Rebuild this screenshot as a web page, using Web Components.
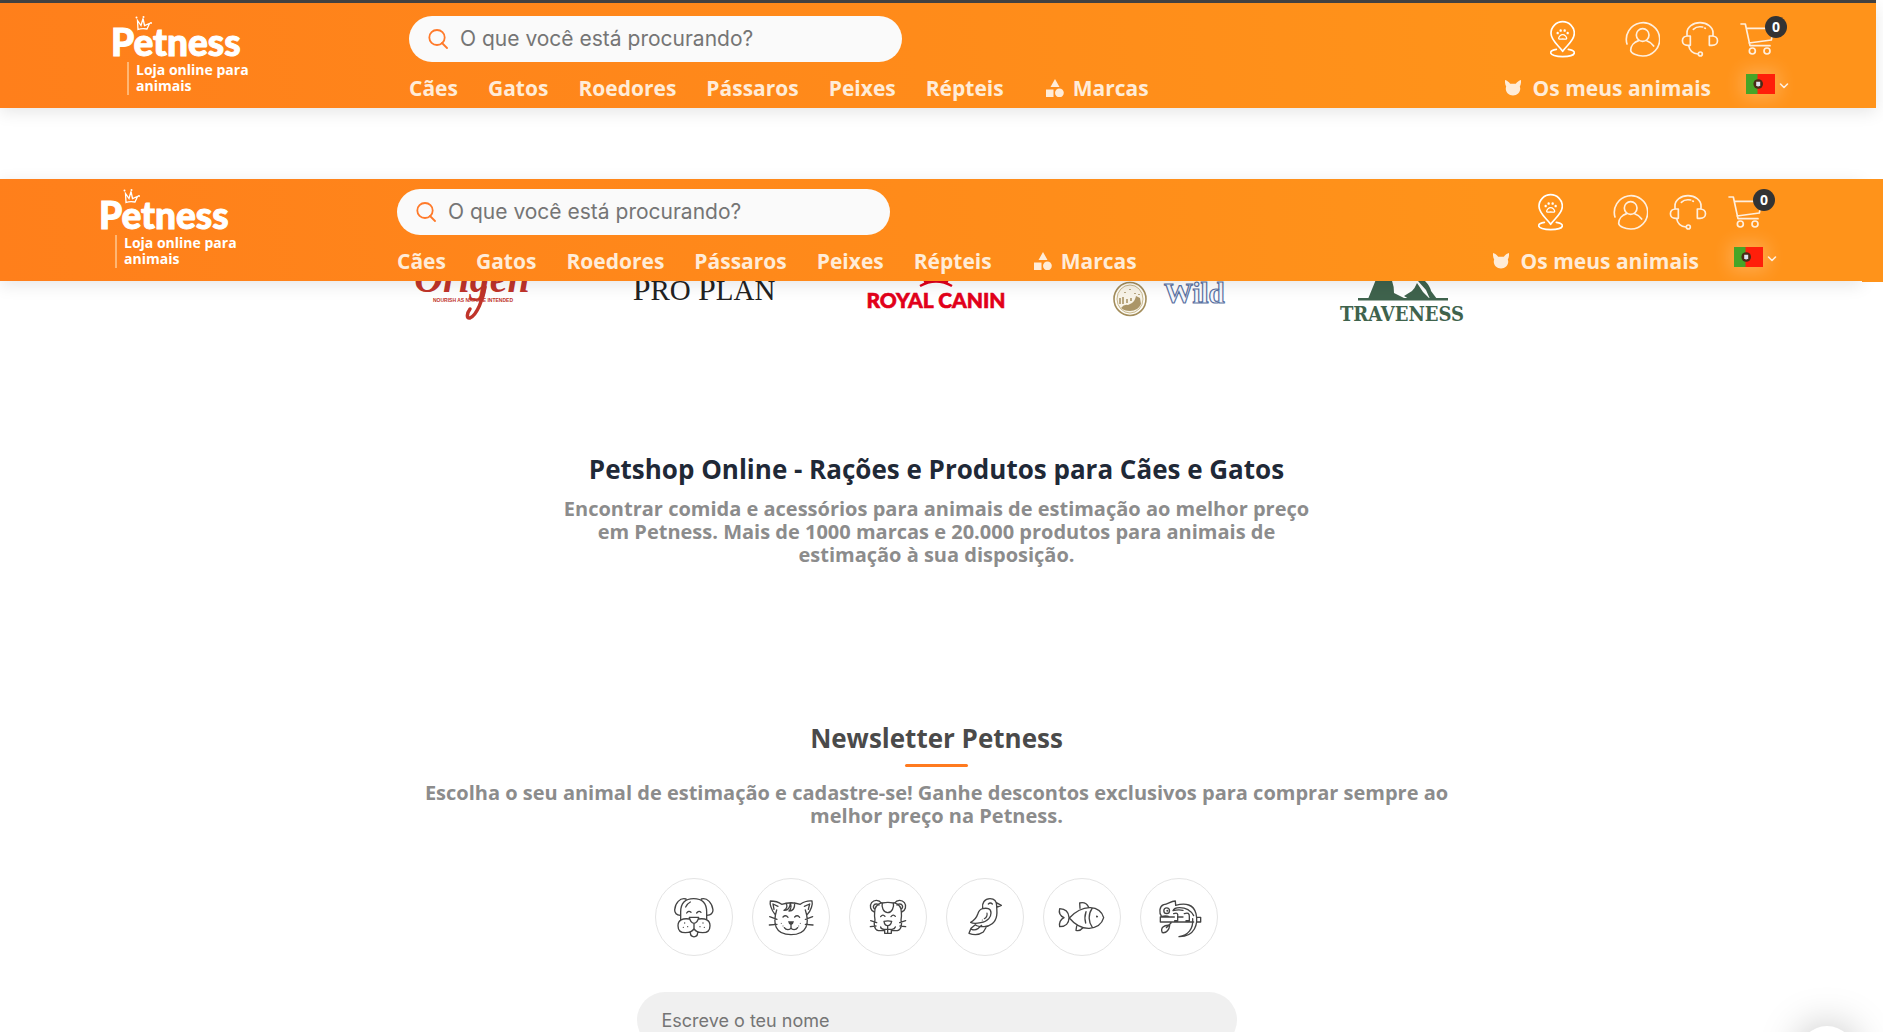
<!DOCTYPE html>
<html lang="pt">
<head>
<meta charset="utf-8">
<meta name="viewport" content="width=device-width, initial-scale=1">
<title>Petness - Loja online para animais</title>
<style>
html,body{margin:0;height:100%;overflow:hidden;background:#fff}
body{font-family:"Open Sans","Noto Sans",sans-serif}
</style>
</head>
<body>
<pet-page></pet-page>

<template id="t-logo">
<style>
:host{display:block;color:#fff;position:relative}
a{color:inherit;text-decoration:none;display:block}
.name{display:block;padding-top:5px;font:900 37px/41px Lato,sans-serif;-webkit-text-stroke:1px #fff}
.tag{display:inline-block;margin-left:16px;border-left:2px solid #ffb673;padding:0 0 1px 7px;font-weight:700;font-size:14px;line-height:16px}
svg{position:absolute;left:24px;top:0;width:20px;height:15px}
</style>
<a href="#"><span class="name">Petness</span><span class="tag">Loja online para<br>animais</span></a>
<svg viewBox="0 0 20 15" fill="none" stroke="#fff" stroke-width="1.3"><path d="M3 13.500 2.500 4.500 6 9.500 8 2.500 9.500 9.500 14.500 7.500 12 13Q7 12 3 13.500Z"/><g fill="#fff" stroke="none"><circle cx="1.500" cy="1.500" r="1"/><circle cx="8.500" cy="1" r="1"/><circle cx="16" cy="7" r="1"/></g></svg>
</template>

<template id="t-search">
<style>
:host{display:block}
label{display:flex;align-items:center;gap:12px;height:46px;padding:0 19px;box-sizing:border-box;border-radius:23px;background:#fafafa}
svg{flex:none;width:20px;height:20px}
input{flex:1;min-width:0;border:0;padding:0;background:none;outline:0;font:400 21px/28px Inter,sans-serif;color:#333}
input::placeholder{color:#757575;opacity:1}
</style>
<label><svg viewBox="0 0 20 20" fill="none" stroke="#ff7a2a" stroke-width="1.8" stroke-linecap="round"><ellipse cx="9" cy="8.500" rx="7.700" ry="7.500"/><path d="M14 14l5 5"/></svg><input type="search" aria-label="Pesquisar" placeholder="O que você está procurando?"></label>
</template>

<template id="t-nav">
<style>
:host{display:block}
nav{display:flex;gap:30px;font-weight:700;font-size:21px;line-height:28px;white-space:nowrap}
a{color:#ffecd8;text-decoration:none}
.brands{display:flex;align-items:center;gap:9px;margin-left:12px}
svg{width:18px;height:18px;fill:#ffecd8}
</style>
<nav><a href="#">Cães</a><a href="#">Gatos</a><a href="#">Roedores</a><a href="#">Pássaros</a><a href="#">Peixes</a><a href="#">Répteis</a><a href="#" class="brands"><svg viewBox="0 0 18 18"><path d="M9 0l4.500 8h-9zM0 10.500h7.500V18H0z"/><circle cx="13.400" cy="13.800" r="4.400"/></svg>Marcas</a></nav>
</template>

<template id="t-tools">
<style>
:host{display:block}
.row{display:flex;align-items:center;justify-content:flex-end}
.icons{height:46px;gap:21px;padding-right:15px}
.icons a{display:flex;position:relative}
.pin{margin-right:29px}
svg{display:block;fill:none;stroke:#ffefde;stroke-width:5;stroke-linecap:round;stroke-linejoin:round}
.badge{position:absolute;right:-13px;top:-6px;width:22px;height:22px;border-radius:50%;background:#333;color:#fff;font-weight:700;font-size:14px;line-height:22px;text-align:center}
.second{margin-top:12px;height:28px;gap:35px}
.mine{display:flex;align-items:center;gap:12px;color:#ffecd8;text-decoration:none;font-weight:700;font-size:21px;line-height:28px;white-space:nowrap}
button{display:flex;align-items:center;align-self:flex-start;gap:4px;border:0;padding:0;background:none}
.flag{box-shadow:0 0 18px 4px rgba(255,255,255,.24)}
</style>
<div class="row icons">
<a class="pin" href="#" aria-label="Lojas"><svg width="25" height="38" viewBox="333 60 75 114"><g stroke="#fff"><path d="M371 154C359 136 336 122 336 100a35 35 0 0 1 70 0C406 122 383 136 371 154ZM352 148C338 150 335 154 335 158c0 7 16 12 36 12s35-5 35-12c0-4-6-8-18-10"/><path stroke-width="4" d="M371 104c-6 0-12 6-12 11 0 4 6 2 12 2s12 2 12-2c0-5-6-11-12-11Z"/><path stroke-width="7" d="M356 99v.5M365 91v1M377 91v1M386 99v.5"/></g></svg></a>
<a href="#" aria-label="Conta"><svg width="35" height="37" viewBox="558 63 105 111"><path d="M564 132A50 50 0 1 1 611 168C594 168 575 160 575 151c0-14 11-25 24-29M644 138c-5-8-12-13-21-16"/><circle cx="611" cy="105" r="19"/></svg></a>
<a href="#" aria-label="Apoio"><svg width="38" height="37" viewBox="725 63 114 111"><path d="M743 108V98a39 30 0 0 1 78 0v10M753 108h-8c-21 0-21 28 0 28h8ZM810 108h8c22 0 22 28 0 28h-8ZM748 137c3 17 14 24 28 25M762 88c7-7 17-9 28-7M796 84l2 1"/><circle cx="783" cy="162" r="6"/></svg></a>
<a href="#" aria-label="Carrinho"><svg width="34" height="34" viewBox="900 67 102 102"><path d="M903 73h13l14 65h60M920 86h77M927 130l67-9 6-32"/><circle cx="937" cy="154" r="9"/><circle cx="981" cy="154" r="9"/></svg><span class="badge">0</span></a>
</div>
<div class="row second">
<a class="mine" href="#"><svg width="16" height="16" viewBox="0 0 16 16"><path fill="#ffecd8" stroke="none" d="M0 0C2 .500 4 2 5.200 3.800h5.600C12 2 14 .500 16 0c.200 3-.300 5-1.200 6.500C16.500 11 13 15.500 8 15.500S-.500 11 1.200 6.500C.300 5-.200 3 0 0Z"/></svg>Os meus animais</a>
<button type="button" aria-label="Idioma"><svg class="flag" width="29" height="20" viewBox="0 0 29 20"><g stroke="none"><path fill="#46a527" d="M0 0h12v20H0z"/><path fill="#ff1f0a" d="M11.500 0H29v20H11.500z"/><circle cx="12.200" cy="10" r="4.800" fill="#4b2a16"/><path fill="#dfe3f0" d="M10.200 7.800h4v3.500q-2 2.500-4 0z"/></g></svg><svg width="10" height="20" viewBox="0 0 10 20" style="stroke-width:1.6"><path d="M1.500 10 5 13.500 8.500 10"/></svg></button>
</div>
</template>

<template id="t-header">
<style>
:host{display:block}
header{display:grid;grid-template-columns:298px 493px 1fr;grid-template-rows:auto auto;padding:var(--top,13px) var(--right,87px) 6px var(--left,111px);background:linear-gradient(82deg,#ff7f1b,#ff8a1a 45%,#ff931a 80%);box-shadow:0 4px 16px rgba(0,0,0,.1)}
pet-logo{grid-row:1/3;height:86px}
pet-search{grid-column:2}
pet-nav{grid-column:2;grid-row:2;margin-top:12px}
pet-tools{grid-column:3;grid-row:1/3}
</style>
<header><pet-logo></pet-logo><pet-search></pet-search><pet-nav></pet-nav><pet-tools></pet-tools></header>
</template>

<template id="t-brands">
<style>
:host{display:block}
ul{list-style:none;margin:0 auto;padding:0;width:1163px;display:grid;grid-template-columns:repeat(5,1fr);justify-items:center}
svg{display:block;width:150px;height:44px}
</style>
<ul>
<li><svg viewBox="-5 0 150 44"><text x="71" y="11" text-anchor="middle" font-family="Liberation Serif" font-style="italic" font-weight="700" font-size="40" fill="#c0342a">Origen</text><path d="M84 6C82 18 76 34 69 37c-4 1-3-5 0-9" fill="none" stroke="#c0342a" stroke-width="3.500" stroke-linecap="round"/><text x="72" y="21" text-anchor="middle" font-family="Liberation Sans" font-weight="700" font-size="5" fill="#c0342a">NOURISH AS NATURE INTENDED</text></svg></li>
<li><svg viewBox="-5 0 150 44"><text x="70" y="19" text-anchor="middle" font-family="Liberation Serif" font-size="29" fill="#222"><tspan font-size="32">P</tspan>RO <tspan font-size="32">P</tspan>LAN</text></svg></li>
<li><svg viewBox="-5 0 150 44"><g fill="none" stroke="#e2001a" stroke-width="2.500"><path d="M54 5Q70-4 86 5M58 1Q70-4 82 1"/></g><text x="70" y="27" text-anchor="middle" font-family="Lato" font-weight="900" font-size="21" fill="#e2001a" stroke="#e2001a" stroke-width=".6">ROYAL CANIN</text></svg></li>
<li><svg viewBox="-5 0 150 44"><ellipse cx="31" cy="18" rx="16" ry="16.500" fill="#fdfbf5" stroke="#a38d5b" stroke-width="1.600"/><ellipse cx="31" cy="18" rx="13" ry="14" fill="#f8f4e8" stroke="#c9b98f"/><path d="M22 27q3-4 7-3l4-2q3-2 4-7l4 2 1 6q-3 7-11 7-6 0-9-3Z" fill="#ab9668"/><path d="M21 17v6M24 16v7M28 18v4M32 17v3M36 12v1M31 8v1M40 13v1M26 11v1" stroke="#ab9668" stroke-width="1.600"/><text x="65" y="22" font-family="Liberation Serif" font-weight="700" font-size="29" fill="#f7f9fd" stroke="#5a71a2" stroke-width="1.200">Wild</text></svg></li>
<li><svg viewBox="-5 0 150 44"><g fill="#3f634d"><path d="M26 17h90v2.500H26zM36 18 45-4H58Q62 2 62 12q6 3 12 6ZM72 15 80 10Q83 7 85 2l6 9 7 7H77ZM86 0h7q5 5 6 10l6 8h-7L94 9Z"/></g><text x="70" y="40" text-anchor="middle" font-family="DejaVu Serif Condensed, DejaVu Serif" font-weight="700" font-size="20" fill="#3f634d">TRAVENESS</text></svg></li>
</ul>
</template>

<template id="t-section">
<style>
:host{display:block;text-align:center}
::slotted(h1),::slotted(h2){margin:0;font-weight:700;font-size:26px;line-height:36px}
::slotted(h1){color:#1f2937}
::slotted(h2){color:#4a4a4a}
::slotted(p){margin:10px 0 0;font-weight:700;font-size:20px;line-height:23px;color:#8c8c8c}
</style>
<slot></slot>
</template>

<template id="t-pets">
<style>
:host{display:flex;justify-content:center;gap:19px}
button{display:block;flex:none;width:78px;height:78px;padding:0;border:1px solid #e4e4e4;border-radius:50%;background:#fff}
svg{display:block;width:76px;height:76px;fill:none;stroke:#444;stroke-width:4;stroke-linecap:round;stroke-linejoin:round}
.f{fill:#444;stroke:none}
</style>
<button type="button" aria-label="Cão"><svg viewBox="44 56 228 228"><path d="M118 179V155c0-24 10-40 39-40s39 16 39 40v24M134 116c-18-5-33 13-34 33 0 8 6 15 17 16M180 116c18-5 33 13 35 33 0 8-6 15-18 16M133 140q6-11 14-15M136 158q6-9 13-2M166 158q7-9 13-2M144 171h28q-3 16-14 18-11-2-14-18ZM144 176c-20-3-34 3-34 20 0 14 8 21 22 21 12 0 22-4 26-12 4 8 14 12 26 12 14 0 22-7 22-21 0-17-14-23-34-20M158 189v16M147 216c0 18 22 18 22 0"/><path stroke-width="4" d="M130 188v.1M126 201v.1M139 199v.1M185 188v.1M176 199v.1M189 201v.1"/></svg></button>
<button type="button" aria-label="Gato"><svg viewBox="338 56 228 228"><path d="M409 149C397 188 403 223 452 223s56-35 43-74M404 162c-12-14-16-32-14-40 12 0 26 4 34 10 18-6 38-6 56 0 8-6 23-11 35-10 3 10-3 28-14 40M401 147l-3-16 15 7M504 147l4-16-16 7M437 128q8 14-6 22 16 2 19-20 6 12-4 22 18 0 17-24M428 170q8-8 15 1M463 170q8-8 15 1M388 169l22 8M387 194l23-2M517 169l-22 8M518 194l-23-2M452 190v12c-3 8-15 8-20 0M452 202c3 8 15 8 20 0"/><path class="f" d="M443 183h18q-1 9-9 11-8-2-9-11Z"/><path stroke-width="3" d="M423 189v.1M428 197v.1M480 189v.1M475 197v.1"/></svg></button>
<button type="button" aria-label="Roedor"><svg viewBox="630 56 228 228"><path d="M704 155c0-15 8-24 22-28M762 127c14 4 22 13 22 28M733 211h-18c-14-4-14-22-10-32-2-8-2-14-1-24M754 211h18c14-4 14-22 11-32 2-8 2-14 1-24M703 155A18 18 0 1 1 724 128M785 155A18 18 0 1 0 764 128M705 147c-9-6-4-17 5-16 4 0 6 2 7 3M783 147c9-6 4-17-5-16-4 0-6 2-7 3M727 128q17-4 33 0c3 12-4 29-17 29s-19-17-16-29ZM722 169q7-9 13-1M753 169q7-9 13-1M732 183q12-3 23 0-3 13-12 13t-11-13ZM743 196v22M722 200q0 6 10 7h24q8-1 10-7M734 207h20v12h-20ZM692 181l18 6M691 199l17-2M797 181l-18 6M797 199l-17-2"/></svg></button>
<button type="button" aria-label="Pássaro"><svg viewBox="52 56 228 228"><path d="M159 144c-3-16 6-29 22-29 12 0 20 8 20 22 0 10 2 17 0 29-3 20-20 34-40 33-9 0-17 0-23-5M200 127l15 8-14 6M176 131q6-6 12 0M159 145c-10 2-13 10-15 17-4 12-13 20-21 24 8 5 21 3 30 1 24-4 31-19 31-29 0-14-13-16-25-13ZM137 193l-13 11-6 15c16 6 32 4 43-4l9-15M126 207q10 4 20-3l10-9"/><path stroke-width="3.500" d="M172 158q2 12-8 17M158 179v.1"/></svg></button>
<button type="button" aria-label="Peixe"><svg viewBox="346 56 228 228"><path d="M422 173c18-19 40-32 63-31 20 1 35 13 40 30-5 18-21 30-43 32-24 1-44-12-60-31ZM421 171c-1-15-10-25-28-26-3 11 2 22 13 27-11 6-15 16-13 27 18 0 28-11 28-27M454 144l-1-16c13-3 23 4 27 13M444 197l-2 13q12 3 20-7M490 145c-12 17-11 40 1 56M472 154c-4 12-4 24-1 34"/><path class="f" d="M502 169a3 3 0 1 1 5 2 3 3 0 0 1-5-2"/></svg></button>
<button type="button" aria-label="Réptil"><svg viewBox="638 56 228 228"><path d="M696 170h42M750 170h14M696 170v15h100M806 171h11v14h-12M700 169c-9-12-7-31 6-36 14-2 20-10 35-11l1 13c30-8 54-3 61 25 7 30-3 70-51 69 26-4 44-22 41-54M701 168q12-4 24 2M734 151q3-9 20-9c20 0 33 8 42 24M734 151q16-4 30-1M736 160q15-6 12 9v12h-9M768 160q16-6 15 9v12h-10M728 188l-14 14M724 195c-1 12-9 24-22 22-7-14 5-24 22-22Z"/><circle cx="715" cy="151" r="8.500"/><circle class="f" cx="717" cy="151" r="3"/></svg></button>
</template>

<template id="t-field">
<style>
:host{display:block}
input{display:block;box-sizing:border-box;width:100%;height:56px;padding:0 25px;border:0;border-radius:28px;background:#f0f0f0;font:400 18px/24px Inter,sans-serif;color:#333}
input::placeholder{color:#757575;opacity:1}
</style>
<input type="text" aria-label="Nome" placeholder="Escreve o teu nome">
</template>

<template id="t-chat">
<style>
:host{position:fixed;right:28px;bottom:-50px}
button{display:block;width:56px;height:56px;border:0;border-radius:50%;background:#fff;box-shadow:0 0 40px rgba(0,0,0,.26)}
</style>
<button type="button" aria-label="Chat"></button>
</template>

<template id="t-page">
<style>
:host{display:block;height:100%;overflow:hidden}
.first{margin-right:7px;border-top:3px solid #434343}
.sticky{display:flex;align-items:flex-start;position:relative;z-index:1;margin-top:71px}
.sticky pet-header{flex:1;--top:10px;--left:99px;--right:85px}
.gutter{width:21px;height:103px;background:#ff931a}
main{padding-right:10px;margin-top:-1px}
.intro{margin-top:126px}
.news{margin-top:154px}
.rule{display:block;width:63px;height:3px;margin:8px auto 0;border-radius:2px;background:#ff7a1f}
.news p{margin-top:14px}
pet-choices{margin-top:51px}
pet-field{width:600px;margin:36px auto 0}
</style>
<pet-header class="first"></pet-header>
<div class="sticky"><pet-header></pet-header><div class="gutter"></div></div>
<main>
<pet-brands></pet-brands>
<pet-section class="intro"><h1>Petshop Online - Rações e Produtos para Cães e Gatos</h1><p>Encontrar comida e acessórios para animais de estimação ao melhor preço<br>em Petness. Mais de 1000 marcas e 20.000 produtos para animais de<br>estimação à sua disposição.</p></pet-section>
<pet-section class="news"><h2>Newsletter Petness</h2><span class="rule"></span><p>Escolha o seu animal de estimação e cadastre-se! Ganhe descontos exclusivos para comprar sempre ao<br>melhor preço na Petness.</p></pet-section>
<pet-choices></pet-choices>
<pet-field></pet-field>
</main>
<pet-chat></pet-chat>
</template>

<script>
const define = (name, id) => customElements.define(name, class extends HTMLElement {
  constructor() {
    super();
    this.attachShadow({ mode: 'open' }).append(document.getElementById(id).content.cloneNode(true));
  }
});
define('pet-logo', 't-logo');
define('pet-search', 't-search');
define('pet-nav', 't-nav');
define('pet-tools', 't-tools');
define('pet-header', 't-header');
define('pet-brands', 't-brands');
define('pet-section', 't-section');
define('pet-choices', 't-pets');
define('pet-field', 't-field');
define('pet-chat', 't-chat');
define('pet-page', 't-page');
</script>
</body>
</html>
